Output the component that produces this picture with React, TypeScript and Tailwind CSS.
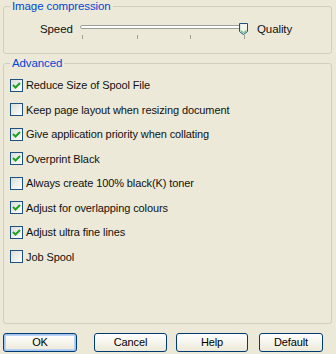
import React from 'react';

const font = { fontFamily: '"Liberation Sans", Arial, sans-serif' };

const options = [
  { label: 'Reduce Size of Spool File', checked: true },
  { label: 'Keep page layout when resizing document', checked: false },
  { label: 'Give application priority when collating', checked: true },
  { label: 'Overprint Black', checked: true },
  { label: 'Always create 100% black(K) toner', checked: false },
  { label: 'Adjust for overlapping colours', checked: true },
  { label: 'Adjust ultra fine lines', checked: true },
  { label: 'Job Spool', checked: false },
];

const CheckBox = ({ checked }: { checked: boolean }) => (
  <span className="flex h-[13px] w-[13px] shrink-0 items-center justify-center border border-[#1c5180] bg-gradient-to-br from-[#dcdcd7] to-white">
    {checked && (
      <svg width="9" height="9" viewBox="0 0 9 9">
        <path d="M1 4 L3.5 6.5 L8 2" fill="none" stroke="#21a121" strokeWidth="2" />
      </svg>
    )}
  </span>
);

const Slider = () => (
  <svg width="168" height="22" viewBox="0 0 168 22" className="block">
    <rect x="0.5" y="2.5" width="165" height="3" rx="1.5" fill="#fff" stroke="#9d9d9a" strokeWidth="1" />
    <path d="M159.5 0.5 h8 v8 l-4 3 l-4 -3 z" fill="#f4f4ef" stroke="#1c5180" />
    <path d="M160.5 7.5 l3 2.2 l3 -2.2" fill="none" stroke="#3cb64a" />
    <path d="M160.5 1.5 v6" stroke="#d8e8d8" />
    {[2, 57, 110, 164].map((x) => (
      <rect key={x} x={x} y="12" width="1" height="4" fill="#a1a192" />
    ))}
  </svg>
);

const Button = ({ label, width, isDefault }: { label: string; width: string; isDefault?: boolean }) => (
  <button
    className={`${width} h-[19px] rounded-[3px] border border-[#003c74] bg-gradient-to-b from-white to-[#ece9d8] text-[11px] leading-none text-black ${
      isDefault ? 'shadow-[inset_0_0_0_1px_#a4c3f1,inset_0_0_0_2px_#b9d1f5]' : ''
    }`}
  >
    {label}
  </button>
);

export default function App() {
  return (
    <div style={font} className="flex h-[354px] w-[336px] flex-col bg-[#ece9d8] text-[11px] tracking-[-0.1px] text-[#111]">
      <fieldset className="ml-[3px] w-[329px] rounded-[3px] border border-[#d0d0bf] px-0 pb-[8px]">
        <legend className="ml-[6px] px-[2px] text-[11.5px] leading-[13px] text-[#0046d5]">Image compression</legend>
        <div className="mt-[10px] flex items-start">
          <span className="ml-[36px] w-[40px] mt-[-2px] text-[11.5px]">Speed</span>
          <Slider />
          <span className="ml-[9px] mt-[-2px] text-[11.5px]">Quality</span>
        </div>
      </fieldset>

      <fieldset className="ml-[3px] mt-[3px] h-[267px] w-[329px] rounded-[3px] border border-[#d0d0bf] px-0">
        <legend className="ml-[6px] px-[2px] text-[11.5px] leading-[13px] text-[#0046d5]">Advanced</legend>
        <div className="ml-[6px] mt-[8px] flex flex-col gap-[10px]">
          {options.map((o) => (
            <label key={o.label} className="flex h-[14.5px] items-center gap-[3px]">
              <CheckBox checked={o.checked} />
              <span>{o.label}</span>
            </label>
          ))}
        </div>
      </fieldset>

      <div className="mt-[9px] flex pl-[3px]">
        <Button label="OK" width="w-[74px]" isDefault />
        <div className="ml-[17px]"><Button label="Cancel" width="w-[73px]" /></div>
        <div className="ml-[9px]"><Button label="Help" width="w-[72px]" /></div>
        <div className="ml-[11px]"><Button label="Default" width="w-[64px]" /></div>
      </div>
    </div>
  );
}
